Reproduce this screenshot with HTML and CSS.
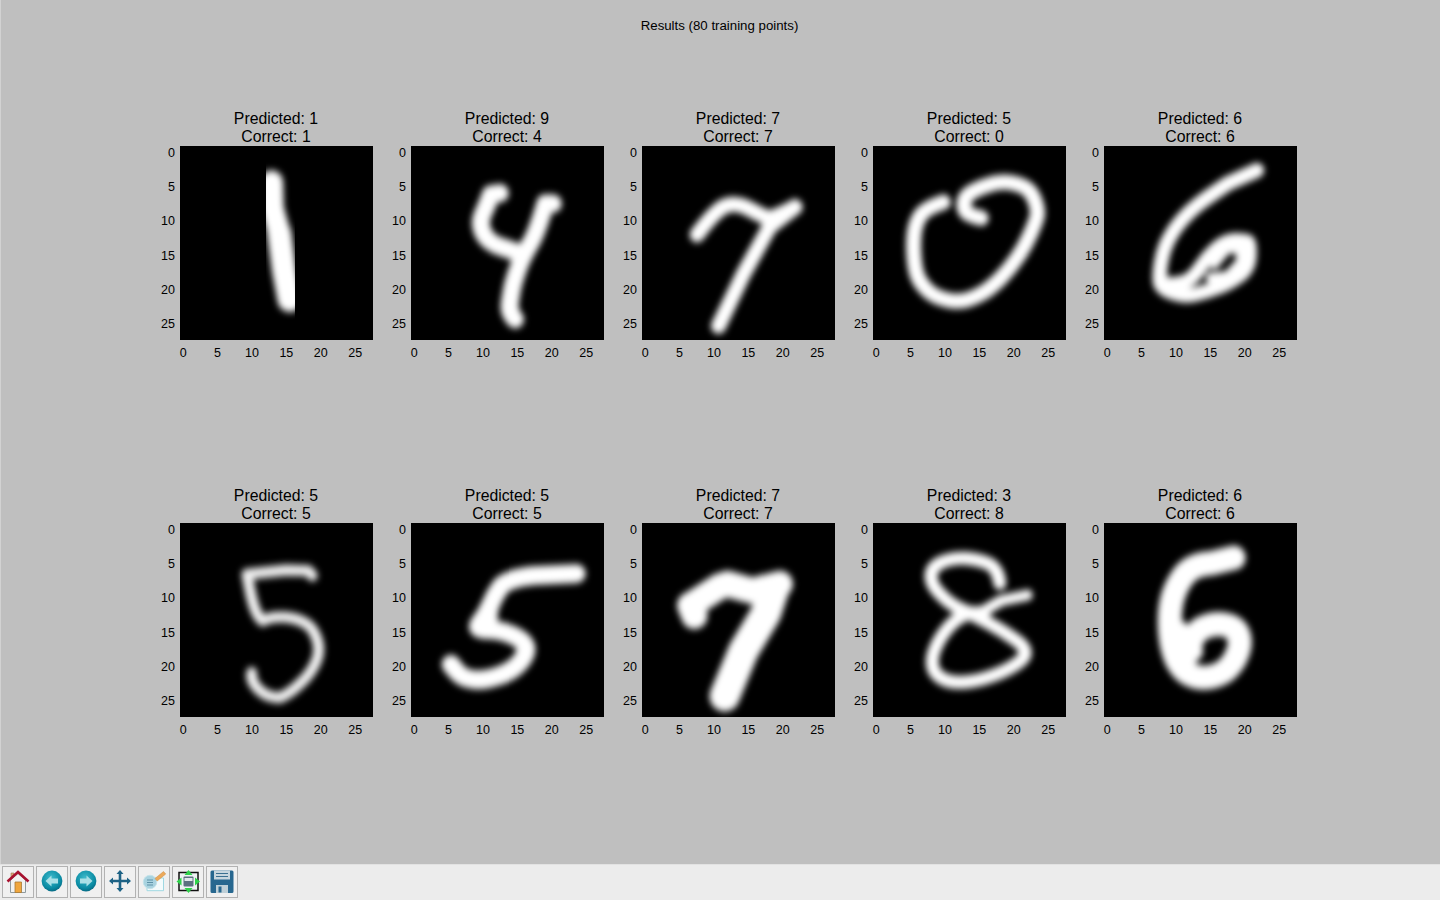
FILE: index.html
```html
<!DOCTYPE html>
<html lang="en">
<head>
<meta charset="utf-8">
<title>Results (80 training points)</title>
<link rel="stylesheet" href="styles.css">
</head>
<body>
<svg class="defs" aria-hidden="true"><defs><filter id="b" x="-30%" y="-30%" width="160%" height="160%" filterUnits="objectBoundingBox"><feGaussianBlur stdDeviation="0.5"/></filter></defs></svg>
<main class="figure">
<h1 class="suptitle">Results (80 training points)</h1>
<div class="grid">

<section class="sub">
<h2 class="title">Predicted: 1<br>Correct: 1</h2>
<div class="plot">
<svg class="img" viewBox="0 0 28 28" preserveAspectRatio="none"><g filter="url(#b)" class="ink"><polyline stroke-width="3.3" points="13.3,5.2 13.4,9 14.4,12.6"/><polyline stroke-width="3.5" points="14.4,12.6 15.1,18 15.9,22.2"/></g></svg>
<div class="yt"><span>0</span><span>5</span><span>10</span><span>15</span><span>20</span><span>25</span></div>
<div class="xt"><span>0</span><span>5</span><span>10</span><span>15</span><span>20</span><span>25</span></div>
</div>
</section>

<section class="sub">
<h2 class="title">Predicted: 9<br>Correct: 4</h2>
<div class="plot">
<svg class="img" viewBox="0 0 28 28" preserveAspectRatio="none"><g filter="url(#b)" class="ink" stroke-width="2.6"><path d="M12.9 6.8 L11.6 7 Q11 8.6 10.4 9.9 Q9.8 11.2 10.5 12.6 Q11.2 14 13.2 14.6 L15.3 15.3"/><path d="M20.6 8.3 L19.5 8.3 Q18.2 12.7 17.3 14.1 Q16.4 15.6 15.8 17 Q15.2 18.5 14.8 20 Q14.4 22 14.3 23 Q14.2 24 15.1 25"/></g></svg>
<div class="yt"><span>0</span><span>5</span><span>10</span><span>15</span><span>20</span><span>25</span></div>
<div class="xt"><span>0</span><span>5</span><span>10</span><span>15</span><span>20</span><span>25</span></div>
</div>
</section>

<section class="sub">
<h2 class="title">Predicted: 7<br>Correct: 7</h2>
<div class="plot">
<svg class="img" viewBox="0 0 28 28" preserveAspectRatio="none"><g filter="url(#b)" class="ink" stroke-width="2.2"><path d="M8 12.8 Q10.4 9.6 11.8 8.8 Q13.4 7.9 15.8 9.2 Q18 10.4 18.6 10.4 Q20 10 22.2 8.8"/><polyline points="22.2,8.8 18.5,11.7 14.7,18.5 11.1,26"/></g></svg>
<div class="yt"><span>0</span><span>5</span><span>10</span><span>15</span><span>20</span><span>25</span></div>
<div class="xt"><span>0</span><span>5</span><span>10</span><span>15</span><span>20</span><span>25</span></div>
</div>
</section>

<section class="sub">
<h2 class="title">Predicted: 5<br>Correct: 0</h2>
<div class="plot">
<svg class="img" viewBox="0 0 28 28" preserveAspectRatio="none"><g filter="url(#b)" class="ink" stroke-width="2.2"><path d="M10.2 8.1 Q7.6 9 6.9 10 Q6.2 11 6 12.5 Q5.8 14 5.95 16 Q6.1 18 6.55 19 Q7 20 8 20.9 Q9 21.8 10.7 22.2 Q12.4 22.6 13.7 22.2 Q15 21.8 16.1 21.1 Q17.2 20.4 18.6 19 Q20 17.5 21 16 Q22 14.6 22.8 12.8 Q23.6 11 23.8 10.2 Q24 9.4 23.6 8.2 Q23.2 7 22.6 6.4 Q22 5.8 20.5 5.4 Q19.1 5 17.5 5.4 Q16 5.8 14.6 6.5 Q13.3 7.2 13.2 8.1 Q13.1 9 13.5 9.5 Q13.8 10 15.7 10.4"/></g></svg>
<div class="yt"><span>0</span><span>5</span><span>10</span><span>15</span><span>20</span><span>25</span></div>
<div class="xt"><span>0</span><span>5</span><span>10</span><span>15</span><span>20</span><span>25</span></div>
</div>
</section>

<section class="sub">
<h2 class="title">Predicted: 6<br>Correct: 6</h2>
<div class="plot">
<svg class="img" viewBox="0 0 28 28" preserveAspectRatio="none"><g filter="url(#b)" class="ink" stroke-width="2.1"><path d="M22.2 3.5 L18 5.4 Q15 7.4 13.7 8.4 Q12.4 9.4 11.2 10.8 Q10 12.2 9.3 13.6 Q8.6 15 8.3 16.7 Q8 18.5 8.1 19.5 Q8.2 20.6 10 21.2 Q11.7 21.8 13.3 21.4 Q15 21 16.5 20.4 Q18 19.9 19.5 18.8 Q21 17.8 21.1 15.9 Q21.2 14 20.8 13.8 Q20.5 13.6 19 13.6 Q17.5 13.7 16.2 14.9 Q15 16 14 17.5 Q13 19 12 19.5 Q11 20 8.8 20"/><polyline stroke-width="1.5" points="15.5,19 18,18.8 20,16.6 19.8,14.8 17.8,14.8 16,17"/></g></svg>
<div class="yt"><span>0</span><span>5</span><span>10</span><span>15</span><span>20</span><span>25</span></div>
<div class="xt"><span>0</span><span>5</span><span>10</span><span>15</span><span>20</span><span>25</span></div>
</div>
</section>

<section class="sub">
<h2 class="title">Predicted: 5<br>Correct: 5</h2>
<div class="plot">
<svg class="img" viewBox="0 0 28 28" preserveAspectRatio="none"><g filter="url(#b)" class="ink ink-thin" stroke-width="1.6"><path d="M19.2 7.6 L18.6 6.9 L15.4 6.8 L9.7 7.4 L10.3 10.4 Q11 13.5 12 14.1 Q13.4 13.4 15.5 13.6 Q18.6 14 19.5 15.9 Q20.5 17.8 19.9 19.6 Q19.2 21.5 17.6 23 Q16 24.6 14.5 25.2 Q12.6 25.3 11.3 23.9 Q10.2 22.8 10.4 21.6"/></g></svg>
<div class="yt"><span>0</span><span>5</span><span>10</span><span>15</span><span>20</span><span>25</span></div>
<div class="xt"><span>0</span><span>5</span><span>10</span><span>15</span><span>20</span><span>25</span></div>
</div>
</section>

<section class="sub">
<h2 class="title">Predicted: 5<br>Correct: 5</h2>
<div class="plot">
<svg class="img" viewBox="0 0 28 28" preserveAspectRatio="none"><g filter="url(#b)" class="ink" stroke-width="2.7"><path d="M24 7.3 L17.7 7.6 Q14 8 13 9.2 Q12.1 10.4 11.5 11.9 Q10.9 13.3 10 14.4 Q9.2 15.4 11 15.4 Q12.9 15.4 14.5 16.1 Q16.2 16.8 16.6 17.7 Q17 18.6 15.9 20 Q14.8 21.4 12.6 22.1 Q10.5 22.8 9 22.6 Q7.4 22.4 6.6 21.4 L5.8 20.4"/><polyline stroke-width="2.2" points="11.6,11.8 11.4,14.6"/></g></svg>
<div class="yt"><span>0</span><span>5</span><span>10</span><span>15</span><span>20</span><span>25</span></div>
<div class="xt"><span>0</span><span>5</span><span>10</span><span>15</span><span>20</span><span>25</span></div>
</div>
</section>

<section class="sub">
<h2 class="title">Predicted: 7<br>Correct: 7</h2>
<div class="plot">
<svg class="img" viewBox="0 0 28 28" preserveAspectRatio="none"><g filter="url(#b)" class="ink" stroke-width="3.8"><polyline points="7,11.9 11.2,9.2 12.4,8.8 16,9.8 20,8.8"/><polyline points="7,11.9 7.6,13.4"/><polyline stroke-width="4.4" points="19.2,9.4 18,13 14.7,18.5 12,25"/></g></svg>
<div class="yt"><span>0</span><span>5</span><span>10</span><span>15</span><span>20</span><span>25</span></div>
<div class="xt"><span>0</span><span>5</span><span>10</span><span>15</span><span>20</span><span>25</span></div>
</div>
</section>

<section class="sub">
<h2 class="title">Predicted: 3<br>Correct: 8</h2>
<div class="plot">
<svg class="img" viewBox="0 0 28 28" preserveAspectRatio="none"><g filter="url(#b)" class="ink" stroke-width="1.9"><path d="M18.4 8.7 Q18.2 6.8 17 6 Q15.7 5.3 13.5 5.1 Q11.4 5 9.9 5.7 Q8.4 6.4 8.4 7.7 Q8.4 9 9.9 10.4 Q11.4 11.9 12.9 12.5 Q14.3 13.1 16.7 14.4 Q19.1 15.7 21 17.1 Q22.9 18.6 21.5 19.8 Q20.1 21 17.5 22 Q14.8 23 12.6 23 Q10.4 23 9.3 21.9 Q8.2 20.8 8.8 18.7 Q9.5 16.7 11 15 Q12.4 13.4 14 13.1"/><polyline stroke-width="1.6" points="14,13 15.7,12.9 18.6,11.2 22.4,10.4"/><polyline stroke-width="2" points="12.8,13 16,13"/></g></svg>
<div class="yt"><span>0</span><span>5</span><span>10</span><span>15</span><span>20</span><span>25</span></div>
<div class="xt"><span>0</span><span>5</span><span>10</span><span>15</span><span>20</span><span>25</span></div>
</div>
</section>

<section class="sub">
<h2 class="title">Predicted: 6<br>Correct: 6</h2>
<div class="plot">
<svg class="img" viewBox="0 0 28 28" preserveAspectRatio="none"><g filter="url(#b)" class="ink" stroke-width="3.5"><path d="M18.8 5 L15.6 5.8 Q12.6 6 11.4 7.8 Q10.2 9.5 9.8 11.4 Q9.4 13.3 9.6 15.8 Q9.8 18.2 10.6 19.9 Q11.5 21.6 13 22.1 Q14.6 22.6 16.3 22 Q18 21.4 19 19.6 Q20 17.7 19.6 16.4 Q19.2 15 17.6 14.7 Q16.1 14.4 14.4 15.1 Q12.8 15.8 12 19"/><polyline stroke-width="2.8" points="11,15.5 13,18.5"/></g></svg>
<div class="yt"><span>0</span><span>5</span><span>10</span><span>15</span><span>20</span><span>25</span></div>
<div class="xt"><span>0</span><span>5</span><span>10</span><span>15</span><span>20</span><span>25</span></div>
</div>
</section>

</div>
</main>
<nav class="toolbar">
<button class="tool" aria-label="Home"><svg class="ico" viewBox="0 0 24 24"><path d="M5 3h3v5H5z" fill="#d9a878" stroke="#a07b58" stroke-width=".6"/><path d="M4.500 10 12 3.500 19.500 10V22.500h-15z" fill="#f2f2f0" stroke="#8f9a9e"/><path d="M9 12h6.500v10.500H9z" fill="#f0a63c" stroke="#a87a35" stroke-width=".8"/><path d="M1.500 11.500 12 2l10.500 9.500" fill="none" stroke="#a8122f" stroke-width="2.600"/></svg></button>
<button class="tool" aria-label="Back"><svg class="ico" viewBox="0 0 24 24"><defs><radialGradient id="g1" cx=".45" cy=".35" r=".7"><stop offset="0" stop-color="#3dbacb"/><stop offset=".7" stop-color="#0a8ba3"/><stop offset="1" stop-color="#06627c"/></radialGradient></defs><circle cx="12" cy="11" r="10.400" fill="url(#g1)"/><path d="M5.500 11 11.500 5.500V8.500H18V13.500H11.500V16.500z" fill="#a9dfe6"/></svg></button>
<button class="tool" aria-label="Forward"><svg class="ico" viewBox="0 0 24 24"><defs><radialGradient id="g2" cx=".45" cy=".35" r=".7"><stop offset="0" stop-color="#3dbacb"/><stop offset=".7" stop-color="#0a8ba3"/><stop offset="1" stop-color="#06627c"/></radialGradient></defs><circle cx="12" cy="11" r="10.400" fill="url(#g2)"/><path d="M18.500 11 12.500 5.500V8.500H6V13.500H12.500V16.500z" fill="#a9dfe6"/></svg></button>
<button class="tool" aria-label="Pan"><svg class="ico" viewBox="0 0 24 24"><path d="M12 0 15.500 4H13.300V9.700H19V7.500l4 3.500-4 3.500V12.300H13.300V18H15.500l-3.500 4-3.500-4h2.200V12.300H5V14.500L1 11 5 7.500v2.200h5.700V4H8.500z" fill="#1d6285"/></svg></button>
<button class="tool" aria-label="Subplots"><svg class="ico" viewBox="0 0 24 24"><path d="M5 8h16.500v12.700H5z" fill="#f4fbfc" stroke="#9fd8e2" stroke-width="1"/><circle cx="8" cy="12" r="6.700" fill="#a9d3e0" stroke="#c4e3ea"/><path d="M5 10h6M5 12.500h6M5 15h6" stroke="#5e93a8" stroke-width="1"/><path d="M13 8.500 21.500 1.500l2.200 2.500-8.500 7z" fill="#eda95a" stroke="#c88a3e" stroke-width=".5"/></svg></button>
<button class="tool" aria-label="Configure"><svg class="ico" viewBox="0 0 24 24"><rect x="3" y="2.500" width="19" height="18" fill="#eef2f3" stroke="#111" stroke-width="1.500"/><rect x="7.500" y="6.500" width="10" height="10" rx="1" fill="#5c6f80"/><rect x="8.500" y="8" width="8" height="3" fill="#e3e8ec"/><path d="M12.500 0 16.500 5H8.500zM12.500 23l4-5H8.500zM.5 11.500l5-4v8zM24 11.500l-5-4v8z" fill="#2ed24a"/></svg></button>
<button class="tool" aria-label="Save"><svg class="ico" viewBox="0 0 24 24"><path d="M.5 2A1.500 1.500 0 0 1 2 .5h20A1.500 1.500 0 0 1 23.500 2v19.500a1.500 1.500 0 0 1-1.500 1.500H2a1.500 1.500 0 0 1-1.500-1.500z" fill="#27678f"/><path d="M4 .5h16v9H4z" fill="#c8d6de"/><path d="M6 3h12v1H6zM6 6h12v1H6z" fill="#3b7090"/><path d="M6 15h12v8H6z" fill="#bfd0d8"/><path d="M8.500 16.500h3v6h-3z" fill="#27678f"/></svg></button>
</nav>
</body>
</html>
```

FILE: styles.css
```css
* { box-sizing: border-box; }
html, body { margin: 0; height: 100%; }
body {
  width: 1440px;
  height: 900px;
  overflow: hidden;
  display: flex;
  flex-direction: column;
  font-family: "Liberation Sans", Arial, sans-serif;
  color: #000;
  background: #bfbfbf;
}
.defs { position: absolute; width: 0; height: 0; }
.figure {
  flex: 1;
  background: #bfbfbf;
  border-left: 1px solid #d2d2d2;
  padding-top: 17px;
}
.suptitle {
  margin: 0;
  padding-right: 2px;
  font-size: 13.25px;
  line-height: 17px;
  font-weight: 400;
  text-align: center;
}
.grid {
  display: grid;
  grid-template-columns: repeat(5, 193px);
  column-gap: 38px;
  row-gap: 146px;
  margin-top: 75px;
  margin-left: 179px;
}
.sub { display: flex; flex-direction: column; }
.title {
  margin: 0;
  padding: 1px 1px 0 0;
  font-size: 15.8px;
  line-height: 18px;
  font-weight: 400;
  text-align: center;
  height: 37px;
}
.plot { position: relative; height: 194px; width: 193px; }
.img {
  display: block;
  width: 193px;
  height: 194px;
  background: #000;
}
.ink polyline,
.ink path {
  fill: none;
  stroke: #fff;
  stroke-linecap: round;
  stroke-linejoin: round;
}
.ink-thin path { stroke: #f0f0f0; }
.yt {
  position: absolute;
  right: 100%;
  top: -10.5px;
  display: flex;
  flex-direction: column;
  font-size: 12.5px;
  padding-right: 5px;
  text-align: right;
}
.yt span { height: 34.4px; line-height: 34.4px; }
.xt {
  position: absolute;
  top: 100%;
  left: -14px;
  display: flex;
  font-size: 12.5px;
  padding-top: 6px;
  line-height: 15px;
}
.xt span { width: 34.4px; text-align: center; }
.toolbar {
  height: 36px;
  flex: none;
  display: flex;
  gap: 2px;
  padding: 1px 2px 2px;
  background: #ececec;
  border-top: 1px solid #e2e2e2;
}
.tool {
  width: 32px;
  height: 32px;
  padding: 0;
  display: flex;
  align-items: center;
  justify-content: center;
  background: #f0f0f0;
  border: 1px solid #b2b2b2;
}
.ico { width: 24px; height: 24px; display: block; }
```
